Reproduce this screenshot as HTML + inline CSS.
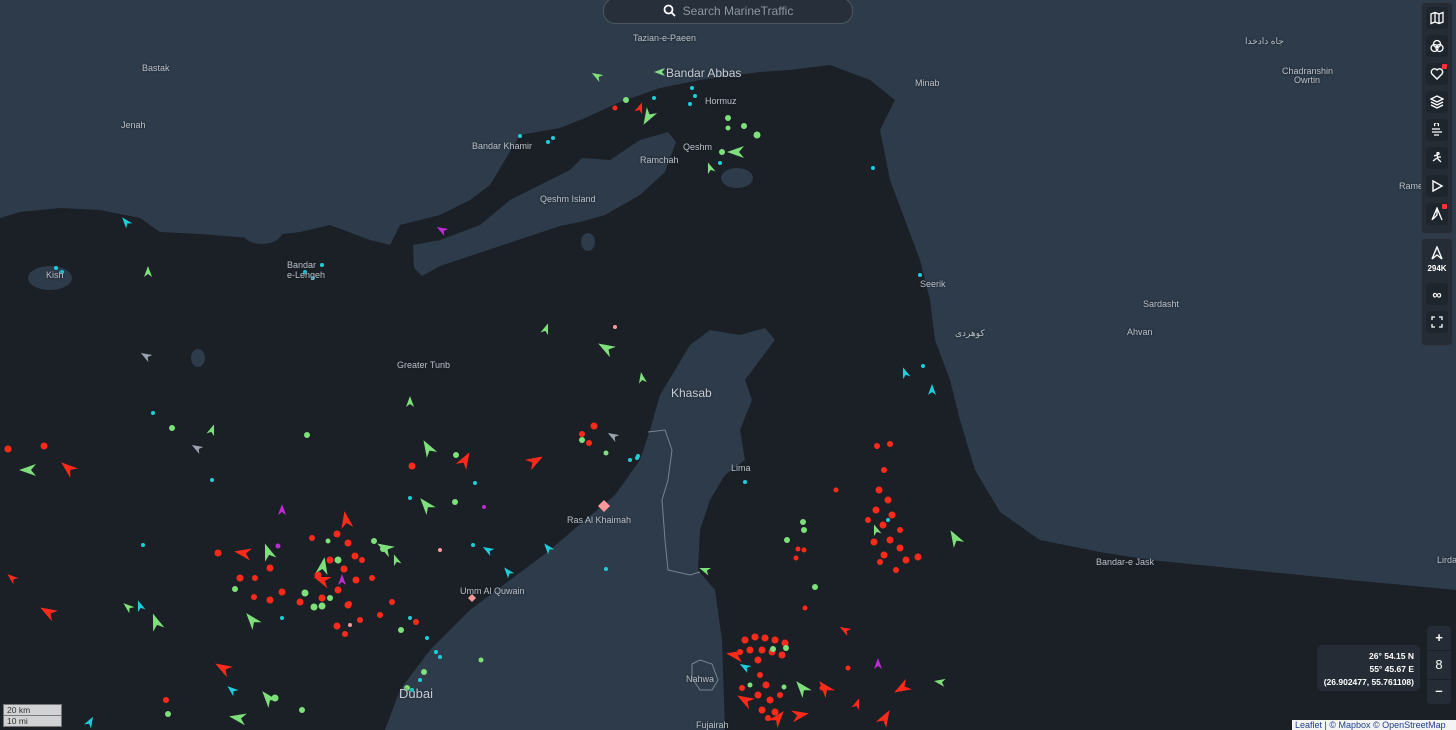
<!DOCTYPE html>
<html><head><meta charset="utf-8"><style>
html,body{margin:0;padding:0;width:1456px;height:730px;overflow:hidden;background:#1b1f26;font-family:"Liberation Sans","Noto Sans CJK SC",sans-serif}
#map{position:absolute;left:0;top:0}
.lbl{position:absolute;color:#b9c0c8;font-size:9px;white-space:nowrap;text-shadow:0 0 2px #1b1f26}
.big{font-size:12px;color:#c8ced6}
.search{position:absolute;left:603px;top:-2px;width:248px;height:24px;border:1px solid #4a5562;border-radius:12px;background:#27303a;color:#8c96a2;font-size:12px;line-height:24px;text-align:center}
.tb{position:absolute;left:1421px;width:30px;background:#252c35;border-radius:4px;border:1px solid #303842;padding-top:2px}
.btn{width:22px;height:22px;margin:0 4px 6px 4px;border-radius:3px;background:#1f252d;display:flex;align-items:center;justify-content:center}
.coords{position:absolute;left:1317px;top:645px;width:103px;height:46px;background:#252c35;border-radius:5px;color:#fff;font-size:8.5px;font-weight:bold;text-align:right;padding:0;line-height:13px}
.zoom{position:absolute;left:1427px;top:626px;width:24px;height:78px;background:#252c35;border-radius:4px;color:#fff;font-size:13px;font-weight:bold;text-align:center}
.attr{position:absolute;left:1292px;top:720px;width:164px;height:10px;background:#f4f4f4;color:#1c3d8c;font-size:9px;line-height:10px;padding-left:3px}
.scale{position:absolute;left:3px;width:54px;height:10px;border:1px solid #777;background:rgba(255,255,255,.8);color:#333;font-size:8.5px;line-height:10px;padding-left:3px}
</style></head><body>
<svg id="map" width="1456" height="730" viewBox="0 0 1456 730">
<defs>
<path id="a" d="M0,-6 L4,5 L0,2 L-4,5 Z"/>
<path id="b" d="M0,-9 L6,8 L0,3 L-6,8 Z"/>
</defs>
<rect width="1456" height="730" fill="#1b1f26"/>
<path fill="#2d3b4a" d="M0,0 L1456,0 L1456,590 L1350,580 L1250,570 L1150,560 L1100,552 L1040,540 L1000,512 L975,470 L960,420 L950,380 L935,340 L930,300 L920,260 L905,220 L890,180 L880,130 L895,100 L915,95 L935,75 L940,55 L948,80 L945,95 L905,105 L895,100 L870,80 L830,65 L790,70 L760,72 L700,80 L660,88 L620,102 L585,118 L560,128 L520,135 L505,160 L490,185 L470,200 L440,215 L400,225 L390,245 L370,240 L330,225 L300,232 L250,238 L200,234 L160,232 L140,218 L100,210 L60,208 L20,212 L0,218 Z"/>
<path fill="#2d3b4a" d="M413,245 L440,240 L480,225 L510,200 L540,185 L570,170 L582,158 L610,160 L640,140 L668,132 L676,142 L665,172 L640,195 L605,215 L580,222 L560,226 L530,236 L500,246 L470,256 L440,266 L422,276 L414,268 Z"/>
<ellipse cx="50" cy="278" rx="22" ry="12" fill="#2d3b4a"/>
<ellipse cx="262" cy="232" rx="20" ry="12" fill="#2d3b4a"/>
<ellipse cx="198" cy="358" rx="7" ry="9" fill="#2d3b4a"/>
<ellipse cx="737" cy="178" rx="16" ry="10" fill="#2d3b4a"/>
<ellipse cx="588" cy="242" rx="7" ry="9" fill="#2d3b4a"/>
<ellipse cx="1165" cy="390" rx="8" ry="5" fill="#2d3b4a"/>
<path fill="#2d3b4a" d="M660,395 L675,370 L690,345 L710,330 L740,335 L765,328 L775,340 L760,360 L745,380 L752,400 L740,430 L745,460 L725,475 L710,500 L700,530 L698,570 L715,590 L722,640 L725,730 L385,730 L400,690 L430,650 L470,610 L510,580 L550,550 L585,520 L615,495 L640,460 L650,430 Z"/>
<path fill="none" stroke="#7a8490" stroke-width="1" d="M648,432 L665,430 L672,450 L668,480 L662,500 L665,540 L668,570 L690,575 L700,572"/>
<path fill="none" stroke="#7a8490" stroke-width="1" d="M692,664 L700,660 L712,664 L718,680 L712,690 L700,690 L692,678 Z"/>
<g fill="#ff2a1a">
<circle cx="8" cy="449" r="3.5"/><circle cx="44" cy="446" r="3.5"/><circle cx="412" cy="466" r="3.5"/>
<circle cx="594" cy="426" r="3.5"/><circle cx="582" cy="434" r="3"/><circle cx="589" cy="443" r="3"/>
<circle cx="218" cy="553" r="3.5"/><circle cx="240" cy="578" r="3.5"/><circle cx="255" cy="578" r="3"/><circle cx="270" cy="568" r="3.5"/><circle cx="282" cy="592" r="3.5"/><circle cx="254" cy="597" r="3"/><circle cx="270" cy="600" r="3.5"/><circle cx="300" cy="602" r="3.5"/>
<circle cx="312" cy="538" r="3"/><circle cx="337" cy="534" r="3.5"/><circle cx="348" cy="543" r="3.5"/><circle cx="355" cy="556" r="3.5"/><circle cx="344" cy="569" r="3.5"/><circle cx="330" cy="560" r="3.5"/><circle cx="318" cy="575" r="3.5"/><circle cx="362" cy="560" r="3"/><circle cx="372" cy="578" r="3"/><circle cx="356" cy="580" r="3.5"/><circle cx="322" cy="598" r="3.5"/><circle cx="338" cy="590" r="3.5"/><circle cx="349" cy="604" r="3"/><circle cx="337" cy="626" r="3.5"/><circle cx="345" cy="634" r="3"/><circle cx="380" cy="615" r="3"/><circle cx="392" cy="602" r="3"/>
<circle cx="348" cy="605" r="3.5"/><circle cx="416" cy="622" r="3"/>
<circle cx="360" cy="620" r="3"/>
<circle cx="877" cy="446" r="3"/><circle cx="890" cy="444" r="3"/><circle cx="884" cy="470" r="3"/><circle cx="879" cy="490" r="3.5"/><circle cx="888" cy="500" r="3.5"/><circle cx="876" cy="510" r="3.5"/><circle cx="892" cy="515" r="3.5"/><circle cx="883" cy="525" r="3.5"/><circle cx="874" cy="542" r="3.5"/><circle cx="890" cy="540" r="3.5"/><circle cx="900" cy="548" r="3.5"/><circle cx="884" cy="555" r="3.5"/><circle cx="906" cy="560" r="3.5"/><circle cx="918" cy="557" r="3.5"/><circle cx="896" cy="570" r="3"/><circle cx="880" cy="562" r="3"/><circle cx="900" cy="530" r="3"/><circle cx="868" cy="520" r="3"/>
<circle cx="798" cy="549" r="2.5"/><circle cx="804" cy="550" r="2.5"/><circle cx="796" cy="558" r="2.5"/><circle cx="836" cy="490" r="2.5"/>
<circle cx="745" cy="640" r="3.5"/><circle cx="755" cy="637" r="3.5"/><circle cx="765" cy="638" r="3.5"/><circle cx="775" cy="640" r="3.5"/><circle cx="785" cy="643" r="3.5"/><circle cx="750" cy="650" r="3.5"/><circle cx="762" cy="650" r="3.5"/><circle cx="772" cy="652" r="3.5"/><circle cx="782" cy="655" r="3.5"/><circle cx="758" cy="660" r="3.5"/><circle cx="740" cy="652" r="3"/>
<circle cx="760" cy="675" r="3"/><circle cx="766" cy="685" r="3.5"/><circle cx="758" cy="695" r="3.5"/><circle cx="770" cy="700" r="3.5"/><circle cx="762" cy="710" r="3.5"/><circle cx="775" cy="712" r="3.5"/><circle cx="768" cy="718" r="3"/><circle cx="780" cy="695" r="3"/><circle cx="742" cy="688" r="3"/>
<circle cx="848" cy="668" r="2.5"/><circle cx="822" cy="688" r="2.5"/><circle cx="615" cy="108" r="2.5"/>
<circle cx="166" cy="700" r="3"/><circle cx="805" cy="608" r="2.5"/>
</g>
<g fill="#ff2a1a">
<use href="#b" transform="translate(243,553) rotate(-80)"/><use href="#b" transform="translate(48,612) rotate(-60)"/><use href="#b" transform="translate(68,468) rotate(-50)"/><use href="#a" transform="translate(12,578) rotate(-50)"/>
<use href="#b" transform="translate(535,461) rotate(60)"/><use href="#b" transform="translate(465,460) rotate(30)"/><use href="#b" transform="translate(322,580) rotate(-70)"/>
<use href="#b" transform="translate(346,520) rotate(-10)"/><use href="#b" transform="translate(223,668) rotate(-60)"/>
<use href="#b" transform="translate(735,655) rotate(-80)"/><use href="#b" transform="translate(745,700) rotate(-60)"/><use href="#b" transform="translate(800,715) rotate(80)"/><use href="#b" transform="translate(778,718) rotate(40)"/>
<use href="#b" transform="translate(885,718) rotate(30)"/><use href="#b" transform="translate(902,688) rotate(-120)"/><use href="#b" transform="translate(825,688) rotate(-40)"/><use href="#a" transform="translate(845,630) rotate(-60)"/><use href="#a" transform="translate(857,704) rotate(20)"/>
<use href="#a" transform="translate(640,108) rotate(20)"/>
</g>
<g fill="#7ee07a">
<circle cx="728" cy="118" r="3"/><circle cx="744" cy="126" r="3"/><circle cx="757" cy="135" r="3.5"/><circle cx="728" cy="128" r="2.5"/><circle cx="722" cy="152" r="3"/><circle cx="626" cy="100" r="3"/>
<circle cx="307" cy="435" r="3"/><circle cx="172" cy="428" r="3"/><circle cx="582" cy="440" r="3"/><circle cx="606" cy="453" r="2.5"/><circle cx="456" cy="455" r="3"/><circle cx="455" cy="502" r="3"/>
<circle cx="328" cy="541" r="2.5"/><circle cx="338" cy="560" r="3.5"/><circle cx="305" cy="593" r="3.5"/><circle cx="314" cy="607" r="3.5"/><circle cx="322" cy="606" r="3.5"/><circle cx="330" cy="598" r="3"/><circle cx="383" cy="549" r="3"/><circle cx="374" cy="541" r="3"/><circle cx="235" cy="589" r="3"/><circle cx="401" cy="630" r="3"/>
<circle cx="803" cy="522" r="3"/><circle cx="804" cy="530" r="3"/><circle cx="787" cy="540" r="3"/><circle cx="815" cy="587" r="3"/>
<circle cx="786" cy="648" r="3"/><circle cx="773" cy="649" r="3"/><circle cx="750" cy="685" r="2.5"/><circle cx="784" cy="687" r="2.5"/>
<circle cx="168" cy="714" r="3"/><circle cx="275" cy="698" r="3.5"/><circle cx="424" cy="672" r="3"/><circle cx="481" cy="660" r="2.5"/>
<circle cx="302" cy="710" r="3"/><circle cx="407" cy="688" r="3"/>
</g>
<g fill="#7ee07a">
<use href="#b" transform="translate(606,348) rotate(-60)"/><use href="#b" transform="translate(736,152) rotate(-90)"/><use href="#b" transform="translate(648,117) rotate(-150)"/><use href="#a" transform="translate(597,76) rotate(-60)"/><use href="#a" transform="translate(660,72) rotate(-90)"/>
<use href="#b" transform="translate(426,505) rotate(-40)"/><use href="#b" transform="translate(428,448) rotate(-30)"/><use href="#b" transform="translate(28,470) rotate(-90)"/><use href="#b" transform="translate(156,622) rotate(-20)"/><use href="#b" transform="translate(252,620) rotate(-40)"/><use href="#b" transform="translate(268,552) rotate(-20)"/><use href="#b" transform="translate(385,548) rotate(-60)"/><use href="#b" transform="translate(323,566) rotate(10)"/>
<use href="#b" transform="translate(268,698) rotate(-40)"/><use href="#b" transform="translate(238,718) rotate(-80)"/><use href="#b" transform="translate(955,538) rotate(-30)"/><use href="#b" transform="translate(802,688) rotate(-40)"/>
<use href="#a" transform="translate(546,329) rotate(20)"/><use href="#a" transform="translate(642,378) rotate(-10)"/><use href="#a" transform="translate(410,402) rotate(0)"/><use href="#a" transform="translate(128,607) rotate(-50)"/><use href="#a" transform="translate(212,430) rotate(20)"/><use href="#a" transform="translate(710,168) rotate(-20)"/><use href="#a" transform="translate(148,272) rotate(0)"/>
<use href="#a" transform="translate(705,570) rotate(-70)"/><use href="#a" transform="translate(940,682) rotate(-80)"/><use href="#a" transform="translate(876,530) rotate(-20)"/><use href="#a" transform="translate(396,560) rotate(-20)"/>
</g>
<g fill="#1ccfdc">
<circle cx="692" cy="88" r="2"/><circle cx="695" cy="96" r="2"/><circle cx="690" cy="104" r="2"/><circle cx="654" cy="98" r="2"/><circle cx="520" cy="136" r="2"/><circle cx="548" cy="142" r="2"/><circle cx="553" cy="138" r="2"/>
<circle cx="720" cy="163" r="2"/><circle cx="873" cy="168" r="2"/><circle cx="920" cy="275" r="2"/><circle cx="305" cy="272" r="2"/><circle cx="313" cy="278" r="2"/><circle cx="56" cy="268" r="2"/><circle cx="62" cy="272" r="2"/><circle cx="322" cy="265" r="2"/>
<circle cx="153" cy="413" r="2"/><circle cx="212" cy="480" r="2"/><circle cx="143" cy="545" r="2"/><circle cx="475" cy="483" r="2"/><circle cx="410" cy="498" r="2"/><circle cx="473" cy="545" r="2"/><circle cx="606" cy="569" r="2"/>
<circle cx="427" cy="638" r="2"/><circle cx="440" cy="657" r="2"/><circle cx="436" cy="652" r="2"/><circle cx="420" cy="680" r="2"/><circle cx="412" cy="690" r="2"/><circle cx="745" cy="482" r="2"/><circle cx="888" cy="520" r="2"/><circle cx="923" cy="366" r="2"/>
<circle cx="630" cy="460" r="2"/><circle cx="638" cy="456" r="2"/><circle cx="637" cy="458" r="2"/><circle cx="410" cy="618" r="2"/><circle cx="282" cy="618" r="2"/>
</g>
<g fill="#1ccfdc">
<use href="#a" transform="translate(126,222) rotate(-40)"/><use href="#a" transform="translate(140,606) rotate(-20)"/><use href="#a" transform="translate(488,550) rotate(-60)"/><use href="#a" transform="translate(508,572) rotate(-40)"/><use href="#a" transform="translate(548,548) rotate(-40)"/><use href="#a" transform="translate(905,373) rotate(-20)"/><use href="#a" transform="translate(932,390) rotate(0)"/><use href="#a" transform="translate(745,667) rotate(-60)"/><use href="#a" transform="translate(90,722) rotate(30)"/><use href="#a" transform="translate(232,690) rotate(-50)"/>
</g>
<g fill="#c02ad6"><circle cx="278" cy="546" r="2.5"/><use href="#a" transform="translate(342,580) rotate(0)"/><use href="#a" transform="translate(442,230) rotate(-60)"/><use href="#a" transform="translate(282,510) rotate(0)"/><use href="#a" transform="translate(878,664) rotate(0)"/><circle cx="484" cy="507" r="2"/></g>
<g fill="#ff9a9a"><circle cx="615" cy="327" r="2"/><circle cx="440" cy="550" r="2"/><circle cx="350" cy="625" r="2"/><path d="M604,500 l6,6 -6,6 -6,-6z"/><path d="M472,594 l4,4 -4,4 -4,-4z"/></g>
<g fill="#9aa2ad"><use href="#a" transform="translate(146,356) rotate(-60)"/><use href="#a" transform="translate(613,436) rotate(-60)"/><use href="#a" transform="translate(197,448) rotate(-60)"/></g>
</svg>

<div class="search"><svg width="13" height="13" viewBox="0 0 13 13" style="vertical-align:-2px;margin-right:7px" fill="none" stroke="#fff" stroke-width="1.8"><circle cx="5.5" cy="5.5" r="4"/><path d="M8.5,8.5 L12,12"/></svg>Search MarineTraffic</div>

<div class="lbl" style="left:633px;top:33px">Tazian-e-Paeen</div>
<div class="lbl big" style="left:666px;top:66px">Bandar Abbas</div>
<div class="lbl" style="left:142px;top:63px">Bastak</div>
<div class="lbl" style="left:121px;top:120px">Jenah</div>
<div class="lbl" style="left:472px;top:141px">Bandar Khamir</div>
<div class="lbl" style="left:640px;top:155px">Ramchah</div>
<div class="lbl" style="left:683px;top:142px">Qeshm</div>
<div class="lbl" style="left:705px;top:96px">Hormuz</div>
<div class="lbl" style="left:540px;top:194px">Qeshm Island</div>
<div class="lbl" style="left:915px;top:78px">Minab</div>
<div class="lbl" style="left:1245px;top:36px">جاه دادخدا</div>
<div class="lbl" style="left:1282px;top:66px">Chadranshin</div>
<div class="lbl" style="left:1294px;top:75px">Owrtin</div>
<div class="lbl" style="left:1399px;top:181px">Rame</div>
<div class="lbl" style="left:287px;top:260px">Bandar</div>
<div class="lbl" style="left:287px;top:270px">e-Lengeh</div>
<div class="lbl" style="left:46px;top:270px">Kish</div>
<div class="lbl" style="left:920px;top:279px">Seerik</div>
<div class="lbl" style="left:1143px;top:299px">Sardasht</div>
<div class="lbl" style="left:1127px;top:327px">Ahvan</div>
<div class="lbl" style="left:955px;top:328px">کوهردی</div>
<div class="lbl" style="left:397px;top:360px">Greater Tunb</div>
<div class="lbl big" style="left:671px;top:386px">Khasab</div>
<div class="lbl" style="left:731px;top:463px">Lima</div>
<div class="lbl" style="left:567px;top:515px">Ras Al Khaimah</div>
<div class="lbl" style="left:1096px;top:557px">Bandar-e Jask</div>
<div class="lbl" style="left:1437px;top:555px">Lirdaf</div>
<div class="lbl" style="left:460px;top:586px">Umm Al Quwain</div>
<div class="lbl" style="left:686px;top:674px">Nahwa</div>
<div class="lbl big" style="left:399px;top:686px;font-size:13px">Dubai</div>
<div class="lbl" style="left:696px;top:720px">Fujairah</div>

<div class="tb" style="top:2px;height:228px">
 <div class="btn" style="margin-top:2px"><svg width="14" height="14" viewBox="0 0 14 14" fill="none" stroke="#fff" stroke-width="1.3"><path d="M1,3 L5,1.5 L9,3 L13,1.5 L13,11 L9,12.5 L5,11 L1,12.5 Z M5,1.5 V11 M9,3 V12.5"/></svg></div>
 <div class="btn"><svg width="14" height="14" viewBox="0 0 14 14" fill="none" stroke="#fff" stroke-width="1.3"><circle cx="7" cy="5" r="3.5"/><circle cx="4.5" cy="9" r="3.5"/><circle cx="9.5" cy="9" r="3.5"/></svg></div>
 <div class="btn" style="position:relative"><svg width="14" height="14" viewBox="0 0 14 14" fill="none" stroke="#fff" stroke-width="1.4"><path d="M7,12 L2,7 A3,3 0 0 1 7,3 A3,3 0 0 1 12,7 Z"/></svg><span style="position:absolute;right:1px;top:1px;width:5px;height:5px;background:#f33;border-radius:1px"></span></div>
 <div class="btn"><svg width="14" height="14" viewBox="0 0 14 14" fill="none" stroke="#fff" stroke-width="1.3"><path d="M7,1 L13,4 L7,7 L1,4 Z M1,7 L7,10 L13,7 M1,10 L7,13 L13,10"/></svg></div>
 <div class="btn"><svg width="14" height="14" viewBox="0 0 14 14" fill="none" stroke="#fff" stroke-width="1.3"><path d="M2,6 H10 M2,9 H12 M4,12 H9 M5,3 A2,2 0 1 1 8,3"/></svg></div>
 <div class="btn"><svg width="14" height="14" viewBox="0 0 14 14" fill="none" stroke="#fff" stroke-width="1.3"><circle cx="8" cy="2.5" r="1"/><path d="M4,5 L7,4 L8,8 L11,11 M7,7 L3,10 M8,6 L11,6"/></svg></div>
 <div class="btn"><svg width="14" height="14" viewBox="0 0 14 14" fill="none" stroke="#fff" stroke-width="1.4"><path d="M3,2 L12,7 L3,12 Z"/></svg></div>
 <div class="btn" style="position:relative"><svg width="14" height="14" viewBox="0 0 14 14" fill="none" stroke="#fff" stroke-width="1.3"><path d="M2,13 L7,1 L12,13 M7,1 L7,8 L3,12"/></svg><span style="position:absolute;right:1px;top:1px;width:5px;height:5px;background:#f33;border-radius:1px"></span></div>
</div>
<div class="tb" style="top:238px;height:104px">
 <div class="btn" style="height:36px;flex-direction:column;background:none;color:#fff;font-size:8px;font-weight:bold"><svg width="14" height="14" viewBox="0 0 14 14" fill="none" stroke="#fff" stroke-width="1.4"><path d="M2,13 L7,1 L12,13 L7,9 Z"/></svg><div style="margin-top:4px">294K</div></div>
 <div class="btn" style="color:#fff;font-weight:bold;font-size:13px">∞</div>
 <div class="btn"><svg width="12" height="12" viewBox="0 0 12 12" fill="none" stroke="#fff" stroke-width="1.3"><path d="M1,4 V1 H4 M8,1 H11 V4 M11,8 V11 H8 M4,11 H1 V8"/></svg></div>
</div>

<div class="coords"><div style="padding:5px 6px 0 0">26° 54.15 N<br>55° 45.67 E<br>(26.902477, 55.761108)</div></div>
<div class="zoom"><div style="height:24px;line-height:24px">+</div><div style="height:28px;line-height:28px;font-weight:normal;border-top:1px solid #1b1f26;border-bottom:1px solid #1b1f26">8</div><div style="height:24px;line-height:22px">–</div></div>
<div class="attr">Leaflet | © Mapbox © OpenStreetMap</div>
<div class="scale" style="top:704px">20 km</div>
<div class="scale" style="top:716px;border-top:none">10 mi</div>
</body></html>
